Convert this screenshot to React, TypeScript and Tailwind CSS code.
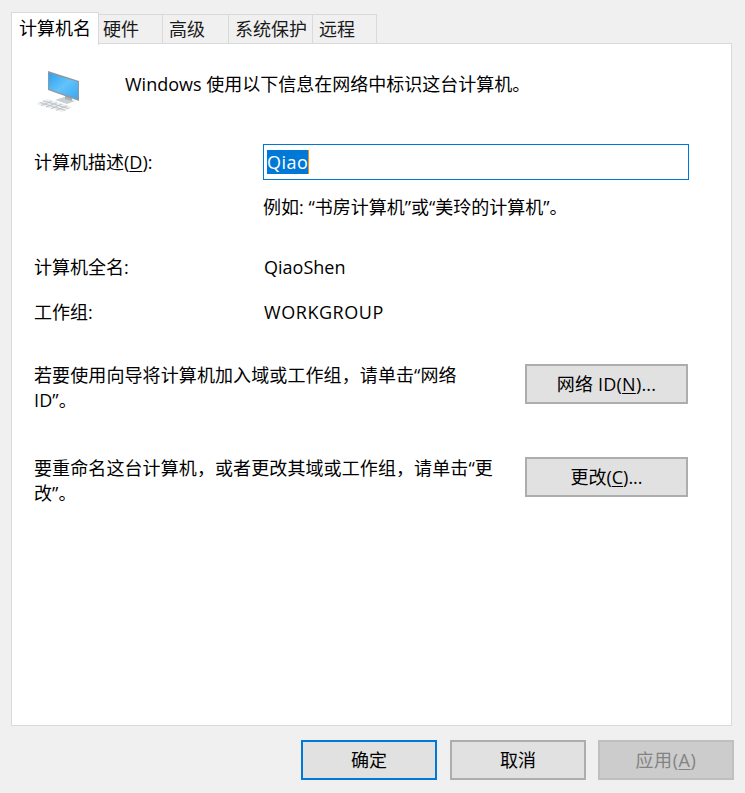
import React from 'react';

const tabs = [
  { label: '硬件', className: 'w-[64px] pl-[4px]' },
  { label: '高级', className: 'w-[66px] pl-[6px]' },
  { label: '系统保护', className: 'w-[84px] pl-[6px]' },
  { label: '远程', className: 'w-[64px] pl-[6px]' },
];

const PcIcon: React.FC = () => (
  <svg width="48" height="48" viewBox="0 0 48 48" className="block">
    <defs>
      <linearGradient id="screen" x1="0" y1="0" x2="1" y2="1">
        <stop offset="0" stopColor="#2f9fee" />
        <stop offset="0.5" stopColor="#63c3fb" />
        <stop offset="1" stopColor="#3ba6ee" />
      </linearGradient>
    </defs>
    {/* stand */}
    <polygon points="21,32 30,29 41,33 33,36" fill="#c9cfd3" />
    <polygon points="31,26 38,28 38,33 31,31" fill="#a9b1b7" />
    {/* monitor */}
    <polygon points="14,3 45,13 45,33 14,22" fill="#8f989f" />
    <polygon points="15,5 44,14 44,31 15,21" fill="url(#screen)" />
    {/* keyboard */}
    <polygon points="2,36 13,31 38,39 28,44" fill="#eceef0" />
    <path
      d="M5.5 34.4 L31.5 42.4 M9 32.8 L35 40.7 M7 37.6 L18 33 M12 39.2 L23 34.5 M17 40.8 L28 36 M22 42.4 L33 37.7"
      stroke="#b4babf"
      strokeWidth="0.8"
      fill="none"
    />
  </svg>
);

const Key: React.FC<{ children: React.ReactNode }> = ({ children }) => (
  <span className="underline underline-offset-2">{children}</span>
);

const App: React.FC = () => {
  return (
    <div
      className="w-[745px] h-[793px] bg-[#f0f0f0] text-[18px] leading-[26px] text-black overflow-hidden"
      style={{ fontFamily: '"Open Sans", "Noto Sans CJK SC", sans-serif' }}
    >
      <div className="pl-[11px] pt-[12px] flex items-end h-[44px]">
        <div className="w-[88px] h-[33px] bg-white border border-b-0 border-[#d9d9d9] flex items-center justify-center pb-[3px] relative z-10 translate-y-[1px]">
          计算机名
        </div>
        {tabs.map((t) => (
          <div
            key={t.label}
            className={`${t.className} h-[30px] border border-l-0 border-[#d9d9d9] bg-[#f0f0f0] flex items-center text-[#1a1a1a]`}
          >
            {t.label}
          </div>
        ))}
      </div>

      <div className="ml-[11px] mt-[-1px] w-[721px] h-[683px] bg-white border border-[#d9d9d9] pl-[22px] pt-[24px]">
        <div className="flex items-start">
          <PcIcon />
          <p className="ml-[43px] mt-[3px]">Windows 使用以下信息在网络中标识这台计算机。</p>
        </div>

        <div className="flex items-center mt-[28px] h-[36px]">
          <div className="w-[229px]">
            计算机描述(<Key>D</Key>):
          </div>
          <div className="w-[426px] h-[36px] border border-[#0078d7] flex items-center pl-[3px]">
            <span className="bg-[#0078d7] text-white h-[24px] leading-[24px] tracking-[0.5px] border-r border-[#ff8c00]">
              Qiao
            </span>
          </div>
        </div>
        <p className="ml-[229px] mt-[14px]">例如: “书房计算机”或“美玲的计算机”。</p>

        <div className="flex mt-[34px]">
          <div className="w-[230px]">计算机全名:</div>
          <div>QiaoShen</div>
        </div>
        <div className="flex mt-[19px]">
          <div className="w-[230px]">工作组:</div>
          <div className="tracking-[0.55px]">WORKGROUP</div>
        </div>

        <div className="flex items-start mt-[39px]">
          <p className="w-[430px] mt-[-1px] leading-[25px] tracking-[0.1px]">
            若要使用向导将计算机加入域或工作组，请单击“网络 ID”。
          </p>
          <button className="ml-[61px] w-[163px] h-[40px] bg-[#e1e1e1] border-2 border-[#adadad] tracking-[0.2px]">
            网络 ID(<Key>N</Key>)...
          </button>
        </div>

        <div className="flex items-start mt-[44px]">
          <p className="w-[460px] mt-[-1px] leading-[25px] tracking-[0.1px]">
            要重命名这台计算机，或者更改其域或工作组，请单击“更改”。
          </p>
          <button className="ml-[31px] w-[163px] h-[40px] bg-[#e1e1e1] border-2 border-[#adadad]">
            更改(<Key>C</Key>)...
          </button>
        </div>
      </div>

      <div className="flex justify-end pr-[11px] mt-[14px]">
        <button className="w-[136px] h-[40px] bg-[#e1e1e1] border-2 border-[#0078d7]">确定</button>
        <button className="ml-[13px] w-[136px] h-[40px] bg-[#e1e1e1] border-2 border-[#adadad]">取消</button>
        <button className="ml-[12px] w-[136px] h-[40px] bg-[#cccccc] border-2 border-[#bfbfbf] text-[#838383] tracking-[0.6px]">
          应用(<Key>A</Key>)
        </button>
      </div>
    </div>
  );
};

export default App;
